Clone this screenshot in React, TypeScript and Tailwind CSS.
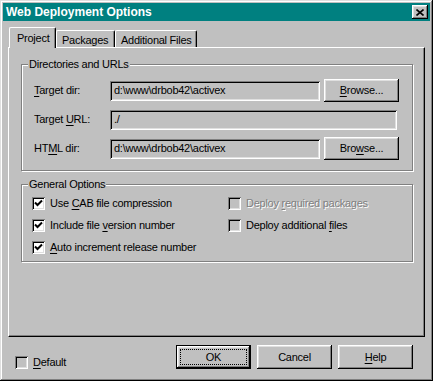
import type { ReactNode } from 'react';

const raised =
  'shadow-[inset_-1px_-1px_0_#000,inset_1px_1px_0_#fff,inset_-2px_-2px_0_#808080,inset_2px_2px_0_#dfdfdf]';
const sunken =
  'shadow-[inset_1px_1px_0_#808080,inset_-1px_-1px_0_#fff,inset_2px_2px_0_#000,inset_-2px_-2px_0_#dfdfdf]';

function U({ children }: { children: ReactNode }) {
  return <span className="underline underline-offset-[2px]">{children}</span>;
}

function Button({ children, w = 'w-[75px] h-[23px]' }: { children: ReactNode; w?: string }) {
  return (
    <div className={`${w} ${raised} bg-[#c0c0c0] flex items-center justify-center`}>
      <span>{children}</span>
    </div>
  );
}

function Field({ value, width }: { value: string; width: string }) {
  return (
    <div className={`${width} h-[20px] ${sunken} bg-[#c0c0c0] flex items-center pl-[4px]`}>
      {value}
    </div>
  );
}

function Check({ checked, disabled, children }: { checked?: boolean; disabled?: boolean; children: ReactNode }) {
  return (
    <div className="flex items-center gap-[5px] h-[13px]">
      <div
        className={`w-[13px] h-[13px] shrink-0 ${sunken} ${checked ? 'bg-white' : 'bg-[#c0c0c0]'} flex items-center justify-center`}
      >
        {checked && (
          <svg width="9" height="9" viewBox="0 0 9 9">
            <path d="M1 3.5 L3.5 6 L8 1.5" stroke="#000" strokeWidth="2" fill="none" />
          </svg>
        )}
      </div>
      <span className={disabled ? 'text-[#808080] [text-shadow:1px_1px_0_#fff]' : ''}>{children}</span>
    </div>
  );
}

function Group({ title, className, children }: { title: string; className: string; children: ReactNode }) {
  return (
    <div
      className={`relative border border-[#808080] shadow-[inset_1px_1px_0_#fff,1px_1px_0_#fff] ${className}`}
    >
      <span className="absolute -top-[7px] left-[6px] px-[1px] bg-[#c0c0c0] leading-[13px]">{title}</span>
      {children}
    </div>
  );
}

export default function App() {
  return (
    <div className="w-[433px] h-[381px] bg-[#c0c0c0] p-[3px] flex flex-col shadow-[inset_-1px_-1px_0_#000,inset_1px_1px_0_#dfdfdf,inset_-2px_-2px_0_#808080,inset_2px_2px_0_#fff] [font-family:'Liberation_Sans',Arial,sans-serif] text-[11px] tracking-[-0.25px] text-black">
      {/* title bar */}
      <div className="h-[18px] bg-[#008080] flex items-center justify-between pl-[3px] pr-[2px]">
        <span className="font-bold text-white text-[12px] tracking-normal">Web Deployment Options</span>
        <div className={`w-[16px] h-[14px] ${raised} bg-[#c0c0c0] flex items-center justify-center`}>
          <svg width="8" height="7" viewBox="0 0 8 7">
            <path d="M0.5 0.5 L7.5 6.5 M7.5 0.5 L0.5 6.5" stroke="#000" strokeWidth="1.6" />
          </svg>
        </div>
      </div>

      <div className="flex flex-col px-[5px] pt-[6px]">
        {/* tabs */}
        <div className="flex items-end h-[21px] pl-[1px] relative z-10 -mb-px">
          <div className="w-[47px] h-[21px] bg-[#c0c0c0] border-l border-t border-white border-r border-r-black rounded-t-[2px] shadow-[inset_-1px_0_0_#808080] pl-[7px] pt-[2px]">
            Project
          </div>
          <div className="w-[59px] h-[17px] mb-px bg-[#c0c0c0] border-l border-t border-white border-r border-r-black rounded-t-[2px] shadow-[inset_-1px_0_0_#808080] pl-[5px] pt-[1px]">
            Packages
          </div>
          <div className="w-[82px] h-[17px] mb-px bg-[#c0c0c0] border-l border-t border-white border-r border-r-black rounded-t-[2px] shadow-[inset_-1px_0_0_#808080] pl-[5px] pt-[1px]">
            Additional Files
          </div>
        </div>

        {/* panel */}
        <div className="h-[290px] border-t border-l border-white border-r border-b border-r-black border-b-black shadow-[inset_-1px_-1px_0_#808080] flex flex-col pt-[16px] pl-[12px]">
          <Group title="Directories and URLs" className="w-[392px] h-[107px] flex flex-col gap-[6px] pt-[14px] pl-[12px]">
            <div className="flex items-center h-[23px]">
              <span className="w-[76px]">
                <U>T</U>arget dir:
              </span>
              <Field value="d:\www\drbob42\activex" width="w-[210px]" />
              <div className="ml-[4px]">
                <Button>
                  <U>B</U>rowse...
                </Button>
              </div>
            </div>
            <div className="flex items-center h-[23px]">
              <span className="w-[76px]">
                Target <U>U</U>RL:
              </span>
              <Field value="./" width="w-[287px]" />
            </div>
            <div className="flex items-center h-[23px]">
              <span className="w-[76px]">
                HT<U>M</U>L dir:
              </span>
              <Field value="d:\www\drbob42\activex" width="w-[210px]" />
              <div className="ml-[4px]">
                <Button>
                  Bro<U>w</U>se...
                </Button>
              </div>
            </div>
          </Group>

          <Group title="General Options" className="w-[392px] h-[78px] mt-[13px] pt-[12px] pl-[10px] grid grid-cols-[196px_1fr] gap-y-[9px] content-start">
            <Check checked>
              Use <U>C</U>AB file compression
            </Check>
            <Check disabled>
              Deploy <U>r</U>equired packages
            </Check>
            <Check checked>
              Include file <U>v</U>ersion number
            </Check>
            <Check>
              Deploy additional <U>f</U>iles
            </Check>
            <Check checked>
              <U>A</U>uto increment release number
            </Check>
          </Group>
        </div>

        {/* bottom row */}
        <div className="flex items-start mt-[8px]">
          <div className="ml-[7px] mt-[11px]">
            <div className="flex items-center gap-[5px] h-[13px]">
              <div className={`w-[13px] h-[13px] ${sunken} bg-[#c0c0c0]`} />
              <span>
                <U>D</U>efault
              </span>
            </div>
          </div>
          <div className="ml-auto mr-[12px] flex gap-[6px]">
            <div className="w-[75px] h-[24px] border border-black flex">
              <div className={`flex-1 ${raised} bg-[#c0c0c0] p-[3px] flex`}>
                <div className="flex-1 border border-dotted border-black flex items-center justify-center">OK</div>
              </div>
            </div>
            <Button w="w-[75px] h-[24px]">Cancel</Button>
            <Button w="w-[75px] h-[24px]">
              <U>H</U>elp
            </Button>
          </div>
        </div>
      </div>
    </div>
  );
}
